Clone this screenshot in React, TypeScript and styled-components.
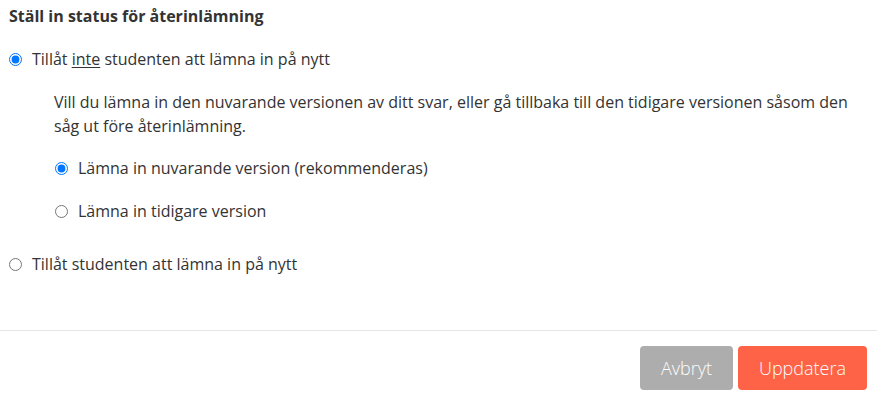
import React, { useState } from 'react';
import styled, { createGlobalStyle } from 'styled-components';

const GlobalStyle = createGlobalStyle`
  html, body {
    margin: 0;
    padding: 0;
    background: #ffffff;
  }
  body {
    font-family: "Open Sans", "Noto Sans", sans-serif;
    color: #333333;
  }
`;

const Dialog = styled.div`
  width: 877px;
  height: 395px;
  display: flex;
  flex-direction: column;
  box-sizing: border-box;
`;

const Body = styled.div`
  padding: 6px 9px 0 9px;
  flex: 1;
`;

const Title = styled.h3`
  margin: 0 0 22px 0;
  font-size: 16px;
  line-height: 20px;
  font-weight: 700;
  color: #333333;
`;

const Option = styled.label<{ $gapTop?: number }>`
  display: flex;
  align-items: center;
  gap: 10px;
  margin-top: ${p => p.$gapTop ?? 0}px;
  font-size: 16px;
  line-height: 22px;
  color: #333333;
  cursor: pointer;
`;

const Radio = styled.input.attrs({ type: 'radio' })`
  margin: 0;
  width: 13px;
  height: 13px;
  accent-color: #0075ff;
  flex-shrink: 0;
`;

const Underlined = styled.span`
  text-decoration: underline;
  text-underline-offset: 2px;
`;

const Nested = styled.div`
  padding-left: 45px;
  margin-top: 20px;
`;

const Description = styled.p`
  margin: 0 0 19px 0;
  font-size: 16px;
  line-height: 24px;
  color: #333333;
`;

const SubOptions = styled.div`
  padding-left: 1px;
  display: flex;
  flex-direction: column;
  gap: 21px;
`;

const Footer = styled.div`
  border-top: 1px solid #e5e5e5;
  display: flex;
  justify-content: flex-end;
  gap: 5px;
  padding: 15px 10px 5px 0;
`;

const Button = styled.button<{ $variant: 'cancel' | 'primary' }>`
  height: 44px;
  padding: 0 10px;
  border: none;
  border-radius: 4px;
  font-family: "Open Sans", "Noto Sans", sans-serif;
  font-size: 18px;
  font-weight: 300;
  color: #fdfdfd;
  cursor: pointer;
  background: ${p => (p.$variant === 'primary' ? '#ff6347' : '#adadad')};
  min-width: ${p => (p.$variant === 'primary' ? 129 : 93)}px;
`;

const App: React.FC = () => {
  const [allow, setAllow] = useState<'no' | 'yes'>('no');
  const [version, setVersion] = useState<'current' | 'previous'>('current');

  return (
    <>
      <GlobalStyle />
      <Dialog>
        <Body>
          <Title>Ställ in status för återinlämning</Title>
          <Option>
            <Radio name="allow" checked={allow === 'no'} onChange={() => setAllow('no')} />
            <span>
              Tillåt <Underlined>inte</Underlined> studenten att lämna in på nytt
            </span>
          </Option>
          <Nested>
            <Description>
              Vill du lämna in den nuvarande versionen av ditt svar, eller gå tillbaka till den tidigare versionen såsom den såg ut före återinlämning.
            </Description>
            <SubOptions>
              <Option>
                <Radio name="version" checked={version === 'current'} onChange={() => setVersion('current')} />
                <span>Lämna in nuvarande version (rekommenderas)</span>
              </Option>
              <Option>
                <Radio name="version" checked={version === 'previous'} onChange={() => setVersion('previous')} />
                <span>Lämna in tidigare version</span>
              </Option>
            </SubOptions>
          </Nested>
          <Option $gapTop={31}>
            <Radio name="allow" checked={allow === 'yes'} onChange={() => setAllow('yes')} />
            <span>Tillåt studenten att lämna in på nytt</span>
          </Option>
        </Body>
        <Footer>
          <Button $variant="cancel">Avbryt</Button>
          <Button $variant="primary">Uppdatera</Button>
        </Footer>
      </Dialog>
    </>
  );
};

export default App;
